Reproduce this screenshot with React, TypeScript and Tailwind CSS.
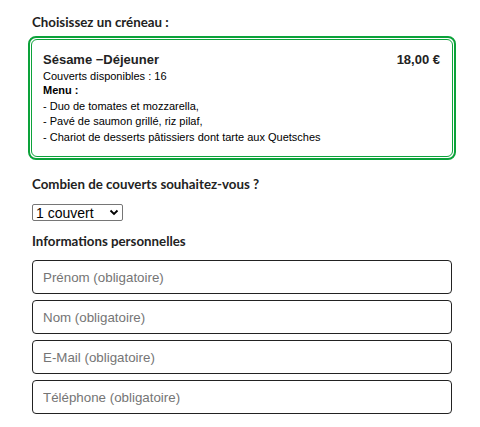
import React from "react";

export default function App() {
  const inputs = [
    "Prénom (obligatoire)",
    "Nom (obligatoire)",
    "E-Mail (obligatoire)",
    "Téléphone (obligatoire)",
  ];
  return (
    <div className="w-[480px] h-[427px] bg-white overflow-hidden">
      <div className="pl-[32px] w-[452px] pt-[13px]">
        <div className="font-['Lato',sans-serif] font-bold text-[13.3px] leading-[19px] text-[#222]">
          Choisissez un créneau :
        </div>
        <div className="-mx-[4px] mt-[4px] border-[2px] border-[#0ca23a] rounded-[8px] p-[1px]">
          <div className="border border-[#0ca23a] rounded-[6px] pl-[11px] pr-[12px] pt-[11px] pb-[11px] font-['Liberation_Sans',Arial,sans-serif] text-black">
            <div className="flex justify-between items-baseline">
              <div className="font-bold text-[13px] leading-[18px] text-[#222]">Sésame −Déjeuner</div>
              <div className="font-bold text-[13px] leading-[18px] text-[#222]">18,00 €</div>
            </div>
            <div className="text-[11px] leading-[14px]">Couverts disponibles : 16</div>
            <div className="text-[11px] leading-[15.5px] font-bold">Menu :</div>
            <div className="text-[11px] leading-[15.5px]">- Duo de tomates et mozzarella,</div>
            <div className="text-[11px] leading-[15.5px]">- Pavé de saumon grillé, riz pilaf,</div>
            <div className="text-[11px] leading-[15.5px]">- Chariot de desserts pâtissiers dont tarte aux Quetsches</div>
          </div>
        </div>
        <div className="mt-[15px] font-['Lato',sans-serif] font-bold text-[13.3px] leading-[19px] text-[#222]">
          Combien de couverts souhaitez-vous ?
        </div>
        <div className="mt-[10px]">
          <div className="w-[91px] h-[17px] border border-[#767676] rounded-[2px] flex items-center justify-between pl-[3px] pr-[3px] text-[14px] leading-[16px] font-['Liberation_Sans',Arial,sans-serif] text-black bg-white">
            <span>1 couvert</span>
            <svg width="10" height="7" viewBox="0 0 10 7" fill="none">
              <path d="M1.5 1.5 L5 5 L8.5 1.5" stroke="#000" strokeWidth="1.8" />
            </svg>
          </div>
        </div>
        <div className="mt-[11px] font-['Lato',sans-serif] font-bold text-[13.3px] leading-[19px] text-[#222]">
          Informations personnelles
        </div>
        <div className="mt-[9px] flex flex-col gap-[6px]">
          {inputs.map((p) => (
            <input
              key={p}
              placeholder={p}
              className="w-[420px] h-[34px] border border-[#222] rounded-[4px] px-[10px] text-[13.33px] font-['Liberation_Sans',Arial,sans-serif] placeholder:text-[#757575] outline-none"
            />
          ))}
        </div>
      </div>
    </div>
  );
}
